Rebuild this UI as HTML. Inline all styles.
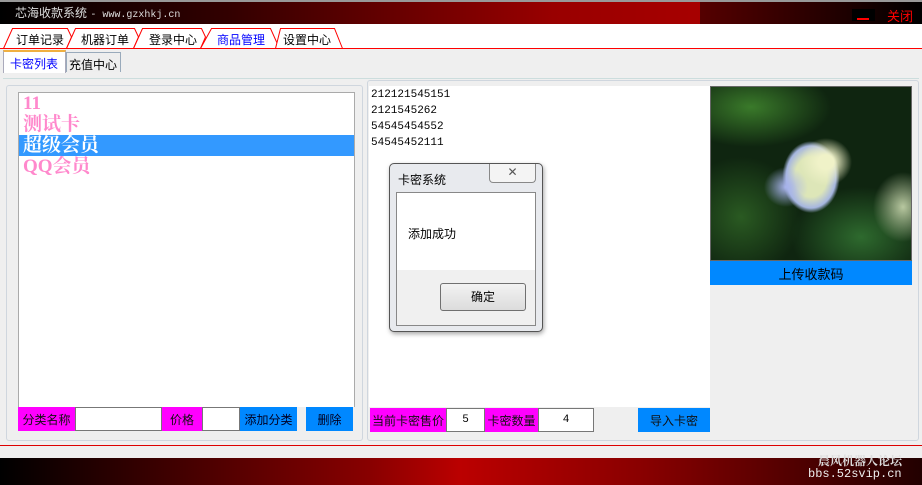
<!DOCTYPE html>
<html><head><meta charset="utf-8"><style>
*{margin:0;padding:0;box-sizing:border-box}
body{width:922px;height:485px;overflow:hidden;background:#efefef;font-family:"Liberation Sans","Noto Sans CJK SC",sans-serif;font-size:12px;position:relative}
.a{position:absolute;white-space:nowrap}
.lbl{position:absolute;display:flex;align-items:center;justify-content:center;font-size:12px;color:#111;white-space:nowrap;overflow:hidden}
.mg{background:#ff00ff}
.bl{background:#0088ff}
.inp{position:absolute;background:#fff;border:1px solid #777;display:flex;align-items:center;justify-content:center;font-family:"Liberation Mono",monospace;font-size:11px}
.li{position:absolute;left:3px;right:0;height:21px;font-family:"Liberation Serif","Noto Serif CJK SC",serif;font-weight:bold;font-size:19px;line-height:21px;color:#ff88cc;padding-left:1px;white-space:nowrap}
.tb{top:31px;font-size:12px;color:#000}
</style></head><body>
<div class="a" style="left:0;top:0;width:922px;height:24px;background:linear-gradient(90deg,#000 0%,#300 25%,#900 60%,#b00 100%)"></div>
<div class="a" style="left:0;top:0;width:922px;height:2px;background:#999"></div>
<div class="a" style="left:700px;top:2px;width:222px;height:22px;background:linear-gradient(90deg,#500,#000)"></div>
<div class="a" style="left:15px;top:6px;color:#ddd;font-size:12px;line-height:14px">芯海收款系统 <span style="font-family:'Liberation Mono',monospace;font-size:10px">- www.gzxhkj.cn</span></div>
<div class="a" style="left:852px;top:9px;width:23px;height:12px;background:#000"></div>
<div class="a" style="left:857px;top:18px;width:12px;height:2px;background:#f00"></div>
<div class="a" style="left:887px;top:6px;color:#f00;font-size:13px">关闭</div>
<div class="a" style="left:0;top:24px;width:922px;height:25px;background:#fff"></div>
<svg class="a" style="left:0;top:24px" width="922" height="26">
<g fill="#fff" stroke="#f00" stroke-width="1">
<path d="M3.5,24.5 L12.5,4.5 H67.5 L71.5,13 L66.5,24.5"/>
<path d="M66.5,24.5 L75.5,4.5 H134.5 L138.5,13 L133.5,24.5"/>
<path d="M133.5,24.5 L142.5,4.5 H201.5 L205.5,13 L200.5,24.5"/>
<path d="M200.5,24.5 L211.5,4.5 H270.5 L279.5,24.5"/>
<path d="M275.5,24.5 L280.5,4.5 H334.5 L342.5,24.5"/>
</g>
<line x1="0" y1="24.5" x2="922" y2="24.5" stroke="#f00"/>
</svg>
<div class="a tb" style="left:16px">订单记录</div>
<div class="a tb" style="left:81px">机器订单</div>
<div class="a tb" style="left:149px">登录中心</div>
<div class="a tb" style="left:217px;color:#00f">商品管理</div>
<div class="a tb" style="left:283px">设置中心</div>
<div class="a" style="left:3px;top:50px;width:63px;height:23px;background:#fff;border-top:2px solid #f0b040;border-left:1px solid #aab;border-right:1px solid #aab"></div>
<div class="a" style="left:10px;top:55px;color:#00f;font-size:12px">卡密列表</div>
<div class="a" style="left:66px;top:52px;width:55px;height:20px;background:#eee;border:1px solid #9ab;border-bottom:none"></div>
<div class="a" style="left:69px;top:56px;color:#000;font-size:12px">充值中心</div>
<div class="a" style="left:3px;top:78px;width:916px;height:1px;background:#cdd"></div>
<div class="a" style="left:6px;top:85px;width:357px;height:356px;border:1px solid #cfd6de;border-radius:3px;background:#efefef"></div>
<div class="a" style="left:18px;top:92px;width:337px;height:315px;background:#fff;border:1px solid #aaa;border-bottom:none">
<div class="li" style="top:0">11</div>
<div class="li" style="top:21px">测试卡</div>
<div class="li" style="top:42px;background:#3399ff;color:#fff;left:0;padding-left:4px">超级会员</div>
<div class="li" style="top:63px">QQ会员</div>
</div>
<div class="lbl mg" style="left:18px;top:407px;width:57px;height:24px">分类名称</div>
<div class="inp" style="left:75px;top:407px;width:87px;height:24px"></div>
<div class="lbl mg" style="left:162px;top:407px;width:40px;height:24px">价格</div>
<div class="inp" style="left:202px;top:407px;width:38px;height:24px"></div>
<div class="lbl bl" style="left:240px;top:407px;width:57px;height:24px;color:#002">添加分类</div>
<div class="lbl bl" style="left:306px;top:407px;width:47px;height:24px;color:#002">删除</div>
<div class="a" style="left:367px;top:80px;width:552px;height:361px;border:1px solid #cfd6de;border-radius:3px;background:#efefef"></div>
<div class="a" style="left:369px;top:86px;width:341px;height:321px;background:#fff;font-family:'Liberation Mono',monospace;font-size:11px;line-height:16px;padding:1px 0 0 2px">212121545151<br>2121545262<br>54545454552<br>54545452111</div>
<div class="lbl mg" style="left:370px;top:408px;width:76px;height:24px">当前卡密售价</div>
<div class="inp" style="left:446px;top:408px;width:39px;height:24px">5</div>
<div class="lbl mg" style="left:485px;top:408px;width:53px;height:24px">卡密数量</div>
<div class="inp" style="left:538px;top:408px;width:56px;height:24px">4</div>
<div class="lbl bl" style="left:638px;top:408px;width:72px;height:24px">导入卡密</div>
<div class="a" style="left:710px;top:86px;width:202px;height:175px;border:1px solid #666;background:
radial-gradient(ellipse 22px 20px at 75px 100px,#a8b4ec,transparent),
radial-gradient(ellipse 26px 24px at 115px 75px,#f0f2c8 30%,transparent),
radial-gradient(ellipse 40px 50px at 100px 90px,#dde6b8 40%,#a6b6e0 62%,transparent 72%),
radial-gradient(ellipse 30px 35px at 192px 120px,#b8c8a0,transparent),
radial-gradient(ellipse 80px 40px at 40px 20px,#3a7a2a,transparent),
radial-gradient(ellipse 70px 50px at 150px 150px,#2e6a2e,transparent),
radial-gradient(ellipse 60px 60px at 30px 130px,#2a5a22,transparent),
#0f2510"></div>
<div class="lbl bl" style="left:710px;top:261px;width:202px;height:24px;color:#000;font-size:13px">上传收款码</div>
<div class="a" style="left:389px;top:163px;width:154px;height:169px;border:1px solid #555;border-radius:5px;background:#e8eaee;box-shadow:1px 2px 5px rgba(0,0,0,.35)"></div>
<div class="a" style="left:398px;top:171px;font-size:12px;color:#000">卡密系统</div>
<div class="a" style="left:489px;top:164px;width:47px;height:19px;border:1px solid #888;border-top:none;border-radius:0 0 4px 4px;background:#f4f4f4;text-align:center;color:#555;font-size:12px;line-height:17px">✕</div>
<div class="a" style="left:396px;top:192px;width:140px;height:134px;border:1px solid #888;background:#f0f0f0"></div>
<div class="a" style="left:397px;top:193px;width:138px;height:77px;background:#fff"></div>
<div class="a" style="left:408px;top:225px;font-size:12px;color:#000">添加成功</div>
<div class="a" style="left:440px;top:283px;width:86px;height:28px;border:1px solid #707070;border-radius:3px;background:linear-gradient(#f2f2f2,#dcdcdc);text-align:center;line-height:26px;font-size:12px">确定</div>
<div class="a" style="left:0;top:445px;width:922px;height:1px;background:#d00"></div>
<div class="a" style="left:0;top:458px;width:922px;height:27px;background:linear-gradient(90deg,#000 0%,#800 40%,#b00 50%,#800 70%,#200 100%)"></div>
<div class="a" style="left:818px;top:452px;color:#ddd;font-size:12px;font-family:'Liberation Serif','Noto Serif CJK SC',serif;font-weight:bold">晨风机器人论坛</div>
<div class="a" style="left:808px;top:467px;color:#eee;font-size:12px;font-family:'Liberation Mono',monospace">bbs.52svip.cn</div>
</body></html>
